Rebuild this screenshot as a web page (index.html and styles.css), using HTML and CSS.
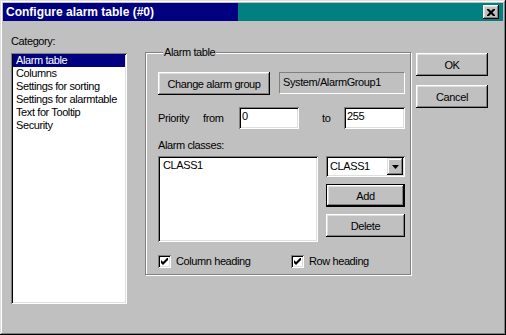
FILE: index.html
```html
<!DOCTYPE html>
<html lang="en">
<head>
    <meta charset="UTF-8">
    <title>Configure alarm table (#0)</title>
    <link rel="stylesheet" href="styles.css">
</head>
<body>
    <div class="dialog">
        <div class="titlebar">
            <span class="title">Configure alarm table (#0)</span>
            <button class="close-btn" aria-label="Close">
                <svg width="8" height="7" viewBox="0 0 8 7"><path d="M0 0h2l2 2l2-2h2v1l-2.5 2.5l2.5 2.5v1h-2l-2-2l-2 2h-2v-1l2.5-2.5l-2.5-2.5z" fill="#000"/></svg>
            </button>
        </div>

        <div class="content">
            <div class="category">
                <div class="cat-label">Category:</div>
                <ul class="listbox cat-list">
                    <li class="selected">Alarm table</li>
                    <li>Columns</li>
                    <li>Settings for sorting</li>
                    <li>Settings for alarmtable</li>
                    <li>Text for Tooltip</li>
                    <li>Security</li>
                </ul>
            </div>

            <fieldset class="group">
                <legend>Alarm table</legend>

                <div class="row group-row">
                    <button class="btn change-btn">Change alarm group</button>
                    <div class="static-field">System/AlarmGroup1</div>
                </div>

                <div class="row priority-row">
                    <span class="lbl-priority">Priority</span>
                    <span class="lbl-from">from</span>
                    <input class="field field-from" type="text" value="0">
                    <span class="lbl-to">to</span>
                    <input class="field field-to" type="text" value="255">
                </div>

                <div class="classes-label">Alarm classes:</div>

                <div class="row classes-row">
                    <ul class="listbox class-list">
                        <li>CLASS1</li>
                    </ul>
                    <div class="class-actions">
                        <div class="combo">
                            <span class="combo-text">CLASS1</span>
                            <span class="combo-btn">
                                <svg width="7" height="4" viewBox="0 0 7 4"><path d="M0 0h7l-3.5 4z" fill="#000"/></svg>
                            </span>
                        </div>
                        <button class="btn btn-default">Add</button>
                        <button class="btn">Delete</button>
                    </div>
                </div>

                <div class="row checks-row">
                    <label class="check check-col">
                        <span class="checkbox"><svg width="7" height="7" viewBox="0 0 7 7"><path d="M0 2l2 2l5-5v3l-5 5l-2-2z" fill="#000"/></svg></span>
                        Column heading
                    </label>
                    <label class="check">
                        <span class="checkbox"><svg width="7" height="7" viewBox="0 0 7 7"><path d="M0 2l2 2l5-5v3l-5 5l-2-2z" fill="#000"/></svg></span>
                        Row heading
                    </label>
                </div>
            </fieldset>

            <div class="actions">
                <button class="btn dlg-btn">OK</button>
                <button class="btn dlg-btn">Cancel</button>
            </div>
        </div>
    </div>
</body>
</html>
```

FILE: styles.css
```css
* { box-sizing: border-box; }

body {
    margin: 0;
    background-color: #c0c0c0;
    font-family: "Liberation Sans", Arial, sans-serif;
    font-size: 11px;
    line-height: 13px;
    letter-spacing: -0.4px;
    color: #000;
}

.dialog {
    width: 506px;
    height: 335px;
    padding: 3px;
    background-color: #c0c0c0;
    box-shadow: inset -1px -1px #000, inset 1px 1px #dfdfdf,
                inset -2px -2px #808080, inset 2px 2px #fff;
}

/* title bar */
.titlebar {
    height: 18px;
    display: flex;
    align-items: center;
    justify-content: space-between;
    padding: 0 4px 0 3px;
    background: linear-gradient(to right, #000080 0 235px, #008080 235px);
}

.title {
    color: #fff;
    font-weight: bold;
    font-size: 12px;
    letter-spacing: 0;
}

.close-btn {
    width: 16px;
    height: 14px;
    padding: 0;
    border: none;
    background-color: #c0c0c0;
    display: flex;
    align-items: center;
    justify-content: center;
    box-shadow: inset -1px -1px #000, inset 1px 1px #fff,
                inset -2px -2px #808080, inset 2px 2px #dfdfdf;
}

/* main area */
.content {
    display: flex;
    align-items: flex-start;
    padding: 14px 0 0 8px;
}

.category { width: 116px; }

.cat-label { margin-bottom: 5px; }

.listbox {
    list-style: none;
    margin: 0;
    padding: 1px 2px 2px 2px;
    background-color: #fff;
    box-shadow: inset 1px 1px #808080, inset -1px -1px #fff,
                inset 2px 2px #000, inset -2px -2px #dfdfdf;
}

.listbox li {
    height: 13px;
    padding-left: 3px;
    white-space: nowrap;
}

.listbox li.selected {
    background-color: #000080;
    color: #fff;
}

.cat-list { height: 251px; }

/* group box */
.group {
    width: 266px;
    height: 229px;
    margin: 11px 0 0 18px;
    padding: 13px 5px 0 12px;
    border: 1px solid #808080;
    box-shadow: inset 1px 1px #fff, 1px 1px #fff;
    min-width: 0;
}

.group legend {
    padding: 0 1px;
    margin-left: 5px;
    line-height: 13px;
    background-color: #c0c0c0;
}

.row { display: flex; align-items: center; }

.btn {
    font-family: inherit;
    font-size: 11px;
    letter-spacing: inherit;
    color: #000;
    height: 23px;
    padding: 0;
    border: none;
    background-color: #c0c0c0;
    box-shadow: inset -1px -1px #000, inset 1px 1px #fff,
                inset -2px -2px #808080, inset 2px 2px #dfdfdf;
}

.btn-default {
    box-shadow: inset 0 0 0 1px #000, inset -2px -2px #000, inset 2px 2px #fff,
                inset -3px -3px #808080, inset 3px 3px #dfdfdf;
}

.change-btn { width: 112px; }

.static-field {
    width: 126px;
    height: 22px;
    margin-left: 9px;
    padding: 3px 0 0 3px;
    border-top: 1px solid #808080;
    border-left: 1px solid #808080;
    border-right: 1px solid #fff;
    border-bottom: 1px solid #fff;
    align-self: flex-start;
}

.priority-row { margin-top: 12px; }

.lbl-priority { width: 45px; }
.lbl-from { width: 36px; }
.lbl-to { width: 22px; margin-left: 23px; }

.field {
    height: 22px;
    padding: 0 0 4px 3px;
    border: none;
    font-family: inherit;
    font-size: 11px;
    letter-spacing: inherit;
    line-height: 13px;
    background-color: #fff;
    box-shadow: inset 1px 1px #808080, inset -1px -1px #fff,
                inset 2px 2px #000, inset -2px -2px #dfdfdf;
    outline: none;
}

.field-from { width: 60px; }
.field-to { width: 61px; }

.classes-label { margin-top: 10px; }

.classes-row { margin-top: 4px; align-items: flex-start; }

.class-list {
    width: 160px;
    height: 86px;
    padding-top: 3px;
}

.class-actions {
    width: 79px;
    margin-left: 8px;
    display: flex;
    flex-direction: column;
}

.combo {
    height: 21px;
    display: flex;
    align-items: center;
    padding: 2px;
    background-color: #fff;
    box-shadow: inset 1px 1px #808080, inset -1px -1px #fff,
                inset 2px 2px #000, inset -2px -2px #dfdfdf;
}

.combo-text { flex: 1; padding-left: 2px; }

.combo-btn {
    width: 16px;
    height: 17px;
    display: flex;
    align-items: center;
    justify-content: center;
    background-color: #c0c0c0;
    box-shadow: inset -1px -1px #000, inset 1px 1px #dfdfdf,
                inset -2px -2px #808080, inset 2px 2px #fff;
}

.class-actions .btn-default { margin-top: 7px; }
.class-actions .btn-default + .btn { margin-top: 7px; }

.checks-row { margin-top: 13px; }

.check {
    display: flex;
    align-items: center;
}

.check-col { width: 133px; }

.checkbox {
    width: 13px;
    height: 13px;
    margin-right: 5px;
    display: flex;
    align-items: center;
    justify-content: center;
    background-color: #fff;
    box-shadow: inset 1px 1px #808080, inset -1px -1px #fff,
                inset 2px 2px #000, inset -2px -2px #dfdfdf;
}

/* OK / Cancel */
.actions {
    display: flex;
    flex-direction: column;
    gap: 9px;
    margin: 18px 0 0 5px;
}

.dlg-btn { width: 72px; }
```
